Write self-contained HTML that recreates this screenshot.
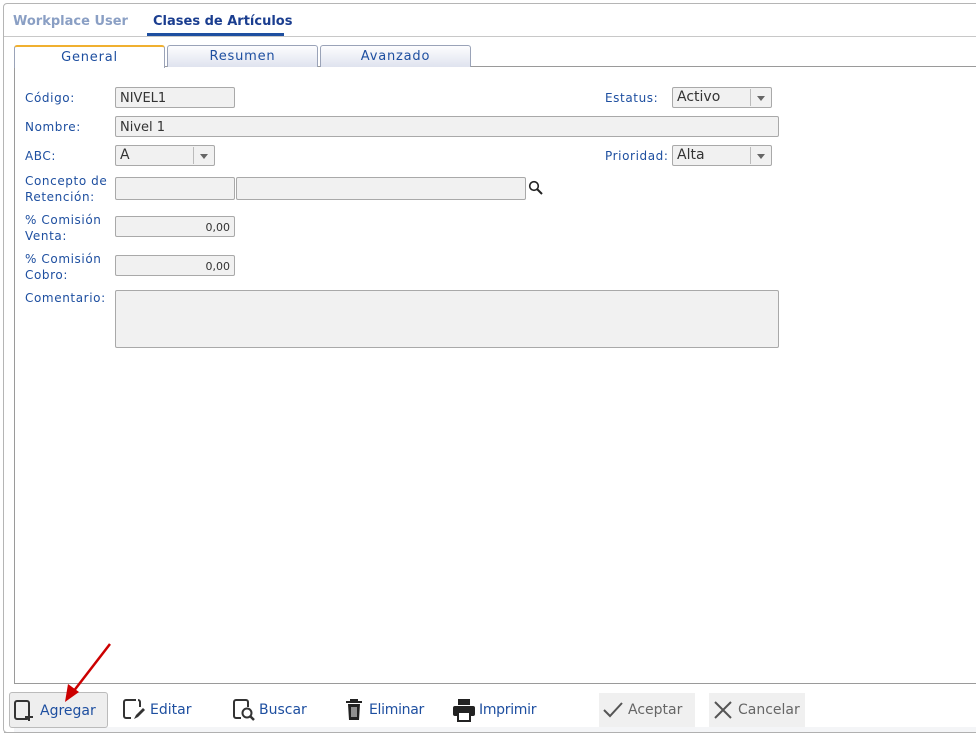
<!DOCTYPE html>
<html><head><meta charset="utf-8"><style>
*{box-sizing:border-box;margin:0;padding:0}
body{width:976px;height:737px;background:#fff;font-family:"DejaVu Sans","Liberation Sans",sans-serif;font-size:12px;position:relative;overflow:hidden;color:#1a3d8f}
.a{position:absolute}
.frame{left:3px;top:3px;width:980px;height:730px;border:1px solid #b5b5b5;border-radius:4px}
.lbl{color:#1e4fa0;font-size:12px;line-height:16px;letter-spacing:.6px}
.inp{background:#f1f1f1;border:1px solid #a9a9a9;border-radius:2px;height:21px;color:#333;font-size:13px;padding:3px 4px 0;font-family:"DejaVu Sans",sans-serif}
.num{text-align:right;font-size:11px;padding-top:4px}
.dd{position:absolute;right:1px;top:1px;width:20px;height:17px;border-left:1px solid #bbb;background:#f1f1f1}
.dd:after{content:"";position:absolute;left:6px;top:7px;border-left:4px solid transparent;border-right:4px solid transparent;border-top:5px solid #666}
.tab{top:45px;height:22px;border:1px solid #9aa3b8;border-bottom:none;border-radius:3px 3px 0 0;background:linear-gradient(#fdfdfe,#dfe3ef);text-align:center;font-size:13px;line-height:20px;color:#1e4fa0;letter-spacing:.8px}
.btn{top:692px;height:36px;font-size:14px;color:#1e4fa0;line-height:36px;font-family:"DejaVu Sans",sans-serif}
.btn svg{position:absolute;top:6px}
</style></head><body>
<div class="a frame"></div>
<div class="a" style="left:13px;top:14px;font-weight:bold;color:#8a9fc4;font-size:13px">Workplace User</div>
<div class="a" style="left:153px;top:14px;font-weight:bold;color:#1a3d8f;font-size:13px">Clases de Artículos</div>
<div class="a" style="left:147px;top:33px;width:137px;height:3px;background:#1e4fa0"></div>
<div class="a" style="left:4px;top:36px;width:972px;height:1px;background:#c8c8c8"></div>
<div class="a" style="left:14px;top:66px;width:962px;height:618px;border:1px solid #9a9a9a;border-right:none"></div>
<div class="a tab" style="left:14px;width:151px;background:#fff;height:23px;border-top:2px solid #f0b030;line-height:21px">General</div>
<div class="a tab" style="left:167px;width:151px;line-height:21px">Resumen</div>
<div class="a tab" style="left:320px;width:151px;line-height:21px">Avanzado</div>

<div class="a lbl" style="left:25px;top:90px">Código:</div>
<div class="a inp" style="left:115px;top:87px;width:120px">NIVEL1</div>
<div class="a lbl" style="left:605px;top:90px">Estatus:</div>
<div class="a inp" style="left:672px;top:87px;width:100px;font-size:14px;padding-top:1px">Activo<div class="dd"></div></div>
<div class="a lbl" style="left:25px;top:119px">Nombre:</div>
<div class="a inp" style="left:115px;top:116px;width:664px">Nivel 1</div>
<div class="a lbl" style="left:25px;top:148px">ABC:</div>
<div class="a inp" style="left:115px;top:145px;width:100px;font-size:14px;padding-top:1px">A<div class="dd"></div></div>
<div class="a lbl" style="left:605px;top:148px">Prioridad:</div>
<div class="a inp" style="left:672px;top:145px;width:100px;font-size:14px;padding-top:1px">Alta<div class="dd"></div></div>
<div class="a lbl" style="left:25px;top:173px">Concepto de<br>Retención:</div>
<div class="a inp" style="left:115px;top:177px;width:120px;height:23px"></div>
<div class="a inp" style="left:236px;top:177px;width:290px;height:23px"></div>
<svg class="a" style="left:528px;top:180px" width="16" height="16" viewBox="0 0 16 16"><circle cx="6" cy="6" r="4.3" fill="none" stroke="#222" stroke-width="1.6"/><path d="M9 9l5 5" stroke="#222" stroke-width="2"/></svg>
<div class="a lbl" style="left:25px;top:212px">% Comisión<br>Venta:</div>
<div class="a inp num" style="left:115px;top:216px;width:120px">0,00</div>
<div class="a lbl" style="left:25px;top:251px">% Comisión<br>Cobro:</div>
<div class="a inp num" style="left:115px;top:255px;width:120px">0,00</div>
<div class="a lbl" style="left:25px;top:290px">Comentario:</div>
<div class="a inp" style="left:115px;top:290px;width:664px;height:58px"></div>

<div class="a" style="left:14px;top:727px;width:962px;height:5px;background:#f4f5f7"></div>
<div class="a" style="left:4px;top:732px;width:972px;height:1px;background:#b0b0b0"></div>
<div class="a btn" style="left:9px;width:99px;border:1px solid #bbb;border-radius:3px;background:#eee"><svg style="left:3px" width="22" height="24" viewBox="0 0 22 24"><rect x="2" y="2" width="14" height="18" rx="2" fill="none" stroke="#333" stroke-width="2"/><path d="M16 14v8M12 18h8" stroke="#333" stroke-width="2"/></svg><span style="position:absolute;left:30px;top:0">Agregar</span></div>
<div class="a btn" style="left:120px;width:80px"><svg style="left:2px" width="24" height="24" viewBox="0 0 24 24"><path d="M14 2H4a2 2 0 0 0-2 2v14a2 2 0 0 0 2 2h5M18 9V4a2 2 0 0 0-2-2" fill="none" stroke="#333" stroke-width="2"/><path d="M12 21l2-4 7-7 2 2-7 7z" fill="#333"/></svg><span style="position:absolute;left:30px">Editar</span></div>
<div class="a btn" style="left:230px;width:90px"><svg style="left:2px" width="26" height="24" viewBox="0 0 26 24"><path d="M9 20H4a2 2 0 0 1-2-2V4a2 2 0 0 1 2-2h10a2 2 0 0 1 2 2v5" fill="none" stroke="#333" stroke-width="2"/><circle cx="15" cy="15" r="4.5" fill="none" stroke="#333" stroke-width="2"/><path d="M18 18l4 4" stroke="#333" stroke-width="2.5"/></svg><span style="position:absolute;left:29px">Buscar</span></div>
<div class="a btn" style="left:342px;width:90px"><svg style="left:2px" width="22" height="24" viewBox="0 0 22 24"><path d="M2 4h16M7 4V2h6v2" stroke="#222" stroke-width="2" fill="none"/><path d="M4 6h12l-1 16H5z" fill="#222"/><path d="M8 9v10M10 9v10M12 9v10" stroke="#fff" stroke-width="1"/></svg><span style="position:absolute;left:27px;letter-spacing:-.3px">Eliminar</span></div>
<div class="a btn" style="left:452px;width:90px"><svg style="left:0" width="24" height="24" viewBox="0 0 24 24"><rect x="6" y="1" width="12" height="6" fill="#222"/><rect x="1" y="8" width="22" height="10" rx="2" fill="#222"/><rect x="6" y="14" width="12" height="9" fill="#fff" stroke="#222" stroke-width="2"/></svg><span style="position:absolute;left:27px;letter-spacing:-.3px">Imprimir</span></div>
<div class="a btn" style="left:599px;width:96px;background:#f0f0f0;color:#666;top:693px;height:34px;line-height:34px"><svg style="left:3px;top:6px" width="22" height="22" viewBox="0 0 22 22"><path d="M2 11l6 6L20 4" fill="none" stroke="#555" stroke-width="2"/></svg><span style="position:absolute;left:29px">Aceptar</span></div>
<div class="a btn" style="left:709px;width:96px;background:#f0f0f0;color:#666;top:693px;height:34px;line-height:34px"><svg style="left:3px;top:6px" width="22" height="22" viewBox="0 0 22 22"><path d="M3 3l16 16M19 3L3 19" stroke="#555" stroke-width="2"/></svg><span style="position:absolute;left:29px">Cancelar</span></div>
<svg class="a" style="left:55px;top:640px" width="60" height="65" viewBox="0 0 60 65"><path d="M55 4L18 52" stroke="#c00" stroke-width="2.5"/><path d="M10 62l3-18 11 8z" fill="#c00"/></svg>
</body></html>
